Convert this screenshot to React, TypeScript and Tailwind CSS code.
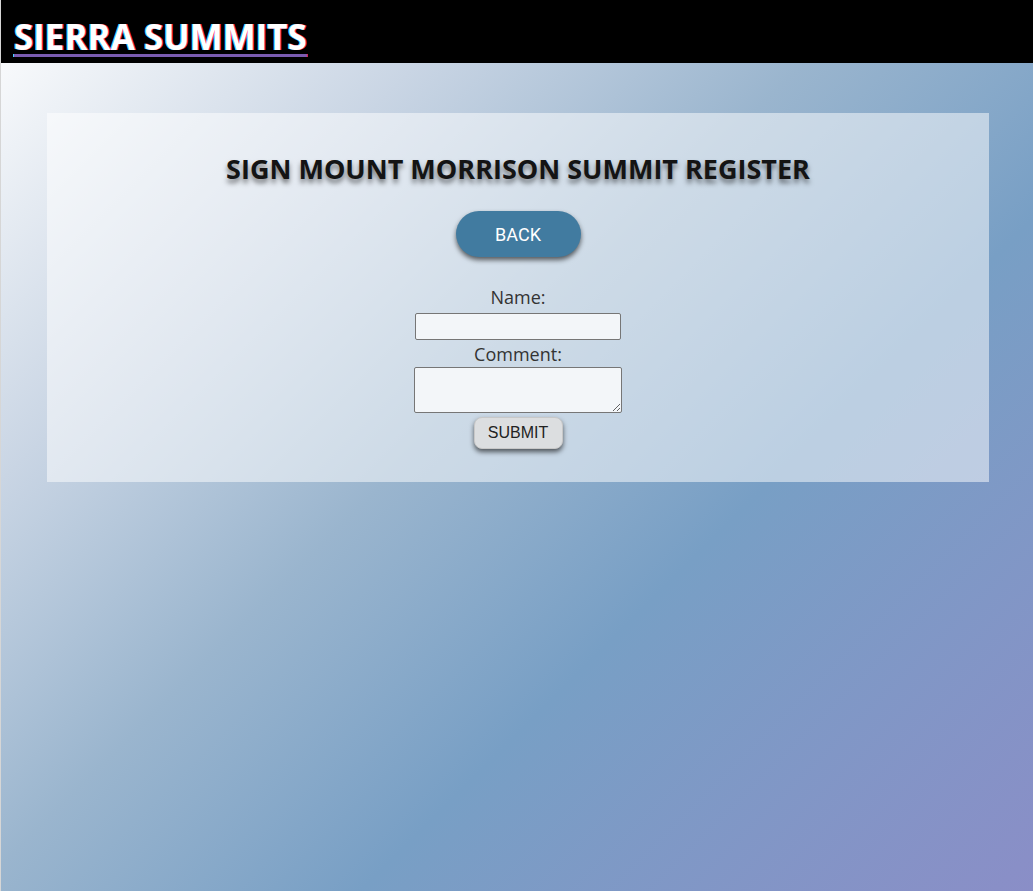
export default function App() {
  return (
    <div className="min-h-[891px] w-full flex flex-col bg-[linear-gradient(135deg,#ffffff_0%,#c9d5e4_25%,#9ab5ce_45%,#789fc5_65%,#8a8ec7_100%)] border-l border-[#d6d6d6] font-['Open_Sans',sans-serif]">
      <header className="h-[63px] bg-black flex items-end pl-[13px] pb-[5px]">
        <a
          href="#"
          className="text-white text-[35px] font-bold leading-[42px] underline decoration-[#7a5bb0] decoration-[3px] underline-offset-[4px] [text-shadow:1px_0_0_#ff2f6a,-1px_0_0_#3fd0ff]"
        >
          SIERRA SUMMITS
        </a>
      </header>

      <main className="pl-[46px] pr-[44px] pt-[50px]">
        <section className="bg-white/50 flex flex-col items-center pt-[38px] pb-[33px]">
          <h1 className="text-[27px] font-bold leading-[36px] text-[#141414] [text-shadow:0_4px_5px_rgba(0,0,0,0.5)]">
            SIGN MOUNT MORRISON SUMMIT REGISTER
          </h1>
          <button className="mt-[24px] w-[125px] h-[46px] rounded-full bg-[#417ba0] text-white text-[18px] font-['Roboto',sans-serif] shadow-[0_3px_5px_rgba(0,0,0,0.6)]">
            BACK
          </button>
          <form className="mt-[28px] flex flex-col items-center text-[#333] text-[18px] leading-[24px] font-['Open_Sans',sans-serif]">
            <label htmlFor="name">Name:</label>
            <input
              id="name"
              className="mt-[4px] w-[206px] h-[27px] bg-[#f3f6f9] border border-[#767676] rounded-[2px]"
            />
            <label htmlFor="comment" className="mt-[2px]">Comment:</label>
            <textarea
              id="comment"
              className="mt-[1px] w-[208px] h-[46px] bg-[#f3f6f9] border border-[#767676] rounded-[2px]"
            />
            <button
              type="button"
              className="mt-[4px] w-[89px] h-[32px] rounded-[8px] bg-[#dcdee0] border border-[#c8c8c8] text-[16px] text-[#222] font-['Liberation_Sans',sans-serif] shadow-[0_3px_5px_rgba(0,0,0,0.6)]"
            >
              SUBMIT
            </button>
          </form>
        </section>
      </main>
    </div>
  );
}
